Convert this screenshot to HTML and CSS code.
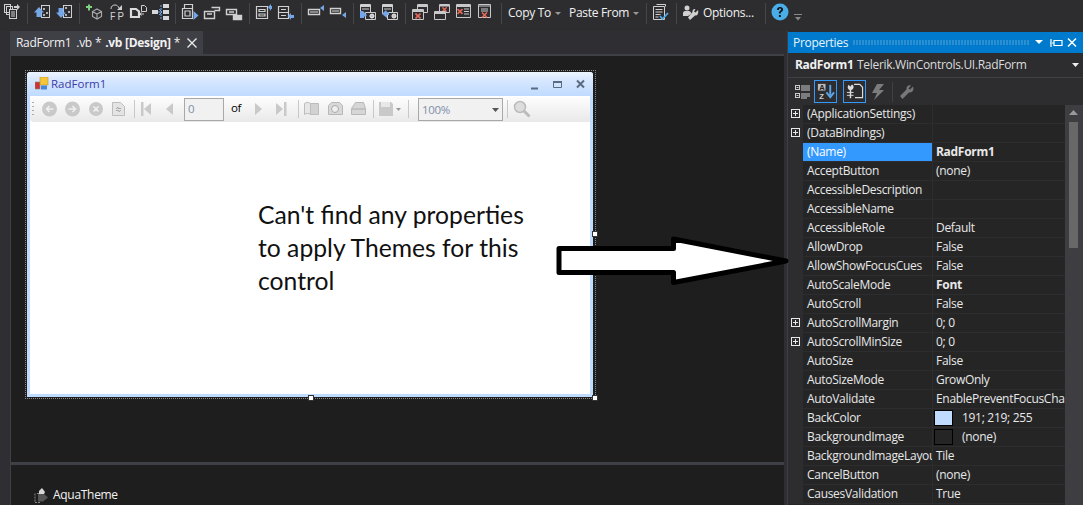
FILE: index.html
```html
<!DOCTYPE html>
<html lang="en">
<head>
<meta charset="utf-8">
<title>Properties</title>
<link rel="stylesheet" href="styles.css">
</head>
<body>
<svg class="defs" width="0" height="0" aria-hidden="true">
  <defs>
    <symbol id="plus" viewBox="0 0 9 9"><rect x=".5" y=".5" width="8" height="8" fill="none" stroke="#e8e8e8"/><path d="M2 4.500h5M4.500 2v5" stroke="#e8e8e8"/></symbol>
    <symbol id="redx" viewBox="0 0 6 6"><path d="M.5.500l5 5M5.500.500l-5 5" stroke="#e8695a" stroke-width="1.600"/></symbol>
    <symbol id="gear" viewBox="0 0 7 7"><circle cx="3.500" cy="3.500" r="2" fill="none" stroke="#ddd" stroke-width="1.400"/><path d="M3.500 0v7M0 3.500h7M1 1l5 5M6 1L1 6" stroke="#ddd" stroke-width=".7"/></symbol>
  </defs>
</svg>

<header class="toolbar">
  <svg class="tb" viewBox="0 0 22 30"><g fill="none" stroke="#d0d0d0"><rect x="3.500" y="4.500" width="6" height="8"/><rect x="5.500" y="6.500" width="6" height="8"/><rect x="8.500" y="9.500" width="7" height="9" fill="#2d2d30"/><path d="M10 12h4M10 14h4M10 16h4"/></g><path d="M13 6h3V4l3 3-3 3V8h-3z" fill="#d0d0d0"/></svg>
  <i class="sep"></i>
  <svg class="tb" viewBox="0 0 22 30"><rect x="10.500" y="5.500" width="8" height="12" fill="#2d2d30" stroke="#d0d0d0"/><circle cx="13" cy="9" r="1" fill="#ddd"/><circle cx="16" cy="13" r="1" fill="#ddd"/><circle cx="13" cy="15" r="1" fill="#ddd"/><path d="M8 7l5 5.500h-2.500V17h-5v-4.500H3z" fill="#74a7e8"/></svg>
  <svg class="tb" viewBox="0 0 22 30"><rect x="10.500" y="5.500" width="8" height="12" fill="#2d2d30" stroke="#d0d0d0"/><circle cx="13" cy="8" r="1" fill="#ddd"/><circle cx="16" cy="12" r="1" fill="#ddd"/><circle cx="13" cy="15" r="1" fill="#ddd"/><path d="M8 18l5-5.500h-2.500V8h-5v4.500H3z" fill="#74a7e8"/></svg>
  <i class="sep"></i>
  <svg class="tb" viewBox="0 0 22 30"><path d="M3 7h6M6 4.500v6" stroke="#7fd07f" stroke-width="2"/><path d="M14 9l4.500 2.500v5L14 19l-4.500-2.500v-5zM9.500 11.500L14 14l4.500-2.500M14 14v5" fill="none" stroke="#a8a8a8" stroke-width="1.200"/></svg>
  <svg class="tb" viewBox="0 0 22 30"><path d="M6 9c0-3 2-4 4-4s3 1 4 3" fill="none" stroke="#d0d0d0"/><path d="M17 5v5h-5z" fill="#d0d0d0"/><text class="fp" x="5" y="20">F P</text></svg>
  <svg class="tb" viewBox="0 0 22 30"><path d="M4 9h5l3 2.500v5.500H4z" fill="none" stroke="#dcdcdc" stroke-width="2.200"/><path d="M14.500 5.500h3l2 2v4h-5zM17 14h-4l1.500-1.500m-1.500 1.500l1.500 1.500" fill="none" stroke="#d0d0d0"/></svg>
  <svg class="tb" viewBox="0 0 22 30"><path d="M3 10h6v4H3zM14 4h6v4h-6zM14 10h6v4h-6zM14 16h6v4h-6z" fill="#d8d8d8"/><path d="M12 5v14M9 12h3" stroke="#74a7e8" stroke-dasharray="2 1"/><path d="M10 9l3 3-3 3" fill="none" stroke="#74a7e8"/></svg>
  <i class="sep"></i>
  <svg class="tb" viewBox="0 0 22 30"><path d="M5.500 8V4.500h8V8M3.500 8.500h10v10h-10zM6 11h5v5H6z" fill="none" stroke="#d0d0d0" stroke-width="1.200"/><path d="M14.500 11l5 4.500-5 4.500z" fill="#74a7e8"/></svg>
  <svg class="tb" viewBox="0 0 22 30"><path d="M3.500 11.500h10v7h-10zM10.500 7.500h8v3h-5M6 14h5" fill="none" stroke="#d0d0d0" stroke-width="1.400"/></svg>
  <svg class="tb" viewBox="0 0 22 30"><path d="M3.500 9.500h10v5h-10zM10.500 15.500h8v4h-8zM6 12h5" fill="none" stroke="#d0d0d0" stroke-width="1.400"/><rect x="11" y="16" width="7" height="3" fill="#d0d0d0"/></svg>
  <i class="sep"></i>
  <svg class="tb" viewBox="0 0 22 30"><path d="M3.500 6.500h11v12h-11zM6 9.500h6v2H6zM6 14h6v2H6z" fill="none" stroke="#d0d0d0" stroke-width="1.200"/><path d="M15 7l3-3v2h1v3h-1v2z" fill="#74a7e8"/></svg>
  <svg class="tb" viewBox="0 0 22 30"><path d="M3.500 6.500h10v12h-10zM4 12.500h9M6 9.500h5M6 15.500h5" fill="none" stroke="#d0d0d0" stroke-width="1.200"/><path d="M13 16l3-3v2h3v3h-3v2z" fill="#74a7e8"/></svg>
  <i class="sep"></i>
  <svg class="tb" viewBox="0 0 22 30"><path d="M3.500 9.500h11v5h-11z" fill="none" stroke="#d0d0d0" stroke-width="1.400"/><rect x="5" y="11" width="8" height="2" fill="#888"/><path d="M15 8l4-3v6z" fill="#74a7e8"/></svg>
  <svg class="tb" viewBox="0 0 22 30"><path d="M3.500 8.500h10v5h-10z" fill="none" stroke="#d0d0d0" stroke-width="1.400"/><rect x="5" y="10" width="7" height="2" fill="#888"/><path d="M15 15l4-3v6z" fill="#74a7e8"/></svg>
  <i class="sep"></i>
  <svg class="tb" viewBox="0 0 22 30"><path d="M3.500 4.500h10v9h-10z" fill="none" stroke="#d0d0d0"/><path d="M4 6h9" stroke="#d0d0d0" stroke-width="2"/><path d="M5 9h7" stroke="#d0d0d0"/><path d="M8.500 12.500h10v7h-10z" fill="#2d2d30" stroke="#d0d0d0"/><use href="#gear" x="12" y="13" width="6" height="6"/><path d="M3 11h3l4 4-2 2-1-1v2H3z" fill="#74a7e8"/></svg>
  <svg class="tb" viewBox="0 0 22 30"><path d="M3.500 4.500h10v9h-10z" fill="none" stroke="#d0d0d0"/><path d="M4 6h9" stroke="#d0d0d0" stroke-width="2"/><path d="M5 9h7" stroke="#d0d0d0"/><path d="M8.500 12.500h10v7h-10z" fill="#2d2d30" stroke="#d0d0d0"/><use href="#gear" x="12" y="13" width="6" height="6"/><path d="M3 14l4-4 1 2h2v3H8v3z" fill="#74a7e8"/></svg>
  <i class="sep"></i>
  <svg class="tb" viewBox="0 0 22 30"><path d="M8.500 4.500h10v8h-10z" fill="none" stroke="#c8c8c8"/><path d="M9 6h9" stroke="#c8c8c8" stroke-width="2"/><path d="M3.500 9.500h11v10h-11z" fill="#2d2d30" stroke="#c8c8c8"/><path d="M4 11h10" stroke="#c8c8c8" stroke-width="2"/><use href="#redx" x="6" y="13" width="6" height="6"/></svg>
  <svg class="tb" viewBox="0 0 22 30"><path d="M8.500 4.500h10v8h-10z" fill="none" stroke="#c8c8c8"/><path d="M9 5.500h9" stroke="#c8c8c8" stroke-width="2"/><use href="#redx" x="11" y="7" width="5" height="5"/><path d="M3.500 11.500h11v8h-11z" fill="#2d2d30" stroke="#c8c8c8"/><path d="M4 13h10" stroke="#c8c8c8" stroke-width="2"/></svg>
  <svg class="tb" viewBox="0 0 22 30"><path d="M3.500 4.500h14v13h-14z" fill="none" stroke="#c8c8c8"/><path d="M4 6h13" stroke="#c8c8c8" stroke-width="2"/><path d="M11 9h5M11 11.500h5M11 14h5" stroke="#c8c8c8"/><use href="#redx" x="4" y="8.500" width="6" height="6"/></svg>
  <svg class="tb" viewBox="0 0 22 30"><path d="M3.500 4.500h12v13h-12z" fill="none" stroke="#c8c8c8"/><path d="M4 6h11M6 9h7M6 11h7" stroke="#c8c8c8"/><use href="#redx" x="6.500" y="12" width="6" height="6"/></svg>
  <i class="sep"></i>
  <span class="menu menu-copy">Copy To<b class="caret"></b></span>
  <span class="menu menu-paste">Paste From<b class="caret"></b></span>
  <i class="sep"></i>
  <svg class="tb" viewBox="0 0 22 30"><path d="M6.500 4.500h9v2M3.500 6.500h11v13h-11z" fill="none" stroke="#d0d0d0"/><path d="M5.500 9.500h7M5.500 12h7M5.500 14.500h5M5.500 17h3" stroke="#d0d0d0"/><path d="M10 16l2.500 3L18 13" fill="none" stroke="#4fa8ea" stroke-width="1.800"/></svg>
  <i class="sep"></i>
  <span class="options">
    <svg class="opt-icon" viewBox="0 0 16 16"><circle cx="4" cy="3" r="2.500" fill="#d0d0d0"/><path d="M0 11V8c0-1 1-2 2-2h4c1 0 2 1 2 2v1l-3 2z" fill="#d0d0d0"/><path d="M15 5l-2.500 2.500-1.500-1 1.500-2.500c-2-.5-3.500 1-3 3L5 12.500 7 15l5-4.500c2 .5 4-1.500 3-5.500z" fill="#d0d0d0"/></svg>
    Options...
  </span>
  <i class="sep sep-help"></i>
  <svg class="help" viewBox="0 0 18 18"><circle cx="9" cy="9" r="8.500" fill="#49ade8"/><path d="M6 7c0-2 1.300-3 3.100-3s3 1 3 2.600c0 2.200-2.400 2-2.400 4H7.900c0-2.800 2.200-2.700 2.200-4 0-.6-.4-1-1-1s-1.100.4-1.200 1.400zM7.900 12h1.900v2H7.900z" fill="#111"/></svg>
  <svg class="overflow" viewBox="0 0 8 8"><path d="M0 1.500h8" stroke="#888"/><path d="M1 4h6L4 7.500z" fill="#888"/></svg>
</header>

<main class="workspace">
  <section class="doc">
    <div class="tabs">
      <div class="tab">
        <span class="t1">RadForm1</span><span class="t2">.vb</span><span class="t3">*</span><strong class="t4">.vb [Design]</strong><span class="t5">*</span>
        <svg class="tab-x" viewBox="0 0 10 10"><path d="M.5.500l9 9M9.500.500l-9 9" stroke="#e8e8e8" stroke-width="1.400"/></svg>
      </div>
    </div>
    <div class="tabline"></div>
    <div class="designer">
      <div class="selection">
        <div class="form">
          <div class="form-title">
            <svg class="form-icon" viewBox="0 0 14 14"><rect x="0" y="5" width="5" height="7" fill="#c33" stroke="#888" stroke-width=".6"/><rect x="5" y="0" width="8" height="8" fill="#f5c63a" stroke="#b8902a" stroke-width=".6"/><rect x="6" y="8.500" width="6" height="4" fill="#4a86d8"/></svg>
            <span class="form-name">RadForm1</span>
            <svg class="win-btns" viewBox="0 0 56 12"><path d="M0 9.500h7" stroke="#5a6a80" stroke-width="2"/><path d="M22.500 2.500h8v6h-8z" fill="none" stroke="#5a6a80"/><path d="M22 3h9" stroke="#5a6a80" stroke-width="2"/><path d="M46 1.500l7 7M53 1.500l-7 7" stroke="#5a6a80" stroke-width="2"/></svg>
          </div>
          <div class="form-bar">
            <svg class="fb-icons" viewBox="0 0 560 25">
              <g fill="#c9c9c9">
                <circle cx="19.500" cy="12" r="7.500"/><circle cx="42.500" cy="12" r="7.500"/><circle cx="66" cy="12" r="7"/>
                <path d="M111 5v14h2.500V5zM121 6v12l-7-6zM143 6v12l-7-6zM225 6v12l7-6zM246 6v12l7-6zM254 5v14h2.500V5z"/>
                <path d="M349 5h12l2 2v12h-14z"/><path d="M366 11h5l-2.500 3z" fill="#999"/>
              </g>
              <g fill="none" stroke="#f0f0f0" stroke-width="1.500"><path d="M23.500 12h-7m3-3l-3 3 3 3M38.500 12h7m-3-3l3 3-3 3M63.500 9.500l5 5m0-5l-5 5"/></g>
              <path d="M82.500 5.500h8l4 4v9h-12z" fill="#e4e4e4" stroke="#bdbdbd"/>
              <path d="M86 12l2-2v1.500h3M91 13l-2 2v-1.500h-3" fill="none" stroke="#aaa"/>
              <path d="M274.500 6.500c2-1.500 4-1.500 6 0v11c-2-1.500-4-1.500-6 0z" fill="#e6e6e6" stroke="#bdbdbd"/>
              <path d="M280.500 6.500h8v11h-8z" fill="#d2d2d2" stroke="#bdbdbd"/>
              <path d="M298.500 8.500l3-3h8l3 3v9h-14z" fill="#d8d8d8" stroke="#b8b8b8"/><circle cx="305" cy="12" r="3.500" fill="#eee" stroke="#aaa"/>
              <path d="M321.500 11.500l4-6h8l2 6v6h-14z" fill="#d6d6d6" stroke="#b8b8b8"/><path d="M322 12h13" stroke="#aaa"/>
              <rect x="351" y="5" width="9" height="5" fill="#e8e8e8"/>
              <path d="M3 5v1m0 3v1m0 3v1m0 3v1" stroke="#aaa" stroke-width="2"/>
              <path d="M104.500 3v18M268.500 3v18M343.500 3v18M378.500 3v18M477.500 3v18" stroke="#c8c8c8"/>
              <circle cx="490" cy="10" r="5.500" fill="#ddd" stroke="#bbb" stroke-width="1.500"/><path d="M494 14l5.500 5.500" stroke="#bbb" stroke-width="3"/>
            </svg>
            <span class="fb-input">0</span>
            <span class="fb-of">of</span>
            <span class="fb-combo">100%<svg class="fb-caret" viewBox="0 0 7 4"><path d="M0 0h7L3.500 4z" fill="#555"/></svg></span>
          </div>
          <div class="form-body">
            <p class="note">Can't find any properties<br>to apply Themes for this<br>control</p>
          </div>
        </div>
        <i class="handle h-right"></i>
        <i class="handle h-bottom"></i>
        <i class="handle h-corner"></i>
      </div>
    </div>
    <div class="tray">
      <svg class="tray-icon" viewBox="0 0 15 15"><path d="M1 5.500v9M1 14.500h5M3 5.500h3" stroke="#888" stroke-dasharray="2 1"/><path d="M4 6h6l4 3.500-5 4H4z" fill="#555"/><path d="M8 0l3 4-1 2H5V3z" fill="#d8d8d8"/></svg>
      <span>AquaTheme</span>
    </div>
  </section>

  <aside class="props">
    <div class="props-title">
      <span class="props-name">Properties</span>
      <i class="dots"></i>
      <svg class="title-btns" viewBox="0 0 42 12"><path d="M0 3h8L4 7z" fill="#fff"/><path d="M16 2v8M16 6h-1M19 3.500h8v5h-8zM17 6h2" fill="none" stroke="#fff" stroke-width="1.200"/><path d="M33 1.500l8 8M41 1.500l-8 8" stroke="#fff" stroke-width="1.500"/></svg>
    </div>
    <div class="props-object">
      <strong>RadForm1</strong><span>Telerik.WinControls.UI.RadForm</span>
      <svg class="obj-caret" viewBox="0 0 7 4"><path d="M0 0h7L3.500 4z" fill="#eee"/></svg>
    </div>
    <div class="props-tools">
      <svg class="pt pt-cat" viewBox="0 0 15 15"><g fill="none" stroke="#ccc"><rect x=".5" y="1.500" width="4" height="4"/><rect x=".5" y="9.500" width="4" height="4"/><path d="M6 2h9M6 4h9M6 6h9M6 10h9M6 12h9M6 14h6"/></g><path d="M1.500 3.500h2M1.500 11.500h2" stroke="#ccc"/></svg>
      <span class="pt-on pt-az"><svg viewBox="0 0 20 20"><rect x="2" y="2" width="8" height="7" fill="#bbb"/><text class="az" x="3.500" y="8.500">A</text><text class="az" x="3.500" y="18">Z</text><path d="M15 3v11" stroke="#5aa6e8" stroke-width="2"/><path d="M11 11l4 5 4-5" fill="none" stroke="#5aa6e8" stroke-width="2"/></svg></span>
      <span class="pt-on pt-pg"><svg viewBox="0 0 20 20"><path d="M9.500 2.500h6l3 3v11h-8" fill="none" stroke="#ddd" stroke-width="1.200"/><path d="M7 3L5.500 5 4 3C2 5 3 8 5 8.500V17h1.500V8.500C9 8 10 5 8 3z" fill="#ddd"/><path d="M2 11h7M2 14h7" stroke="#ddd"/></svg></span>
      <svg class="pt pt-bolt" viewBox="0 0 14 16"><path d="M6 0h7L8 6h5L3 16l3-7H1z" fill="#7c7c7c"/></svg>
      <i class="pt-sep"></i>
      <svg class="pt pt-wrench" viewBox="0 0 14 14"><path d="M13 1.500L10 4.500 8.500 3.500 11 .5C8.500-.5 6 1.500 6.500 4.500L0 11l2.500 3 6.500-6.500c3 .5 5.500-2 4-6z" fill="#777"/></svg>
    </div>
    <div class="grid-wrap">
      <div class="grid">
        <div class="row"><svg class="plus"><use href="#plus"/></svg><span class="k">(ApplicationSettings)</span><span class="v"></span></div>
        <div class="row"><svg class="plus"><use href="#plus"/></svg><span class="k">(DataBindings)</span><span class="v"></span></div>
        <div class="row row-sel"><span class="k">(Name)</span><span class="v v-b">RadForm1</span></div>
        <div class="row"><span class="k">AcceptButton</span><span class="v">(none)</span></div>
        <div class="row"><span class="k">AccessibleDescription</span><span class="v"></span></div>
        <div class="row"><span class="k">AccessibleName</span><span class="v"></span></div>
        <div class="row"><span class="k">AccessibleRole</span><span class="v">Default</span></div>
        <div class="row"><span class="k">AllowDrop</span><span class="v">False</span></div>
        <div class="row"><span class="k">AllowShowFocusCues</span><span class="v">False</span></div>
        <div class="row"><span class="k">AutoScaleMode</span><span class="v v-b">Font</span></div>
        <div class="row"><span class="k">AutoScroll</span><span class="v">False</span></div>
        <div class="row"><svg class="plus"><use href="#plus"/></svg><span class="k">AutoScrollMargin</span><span class="v">0; 0</span></div>
        <div class="row"><svg class="plus"><use href="#plus"/></svg><span class="k">AutoScrollMinSize</span><span class="v">0; 0</span></div>
        <div class="row"><span class="k">AutoSize</span><span class="v">False</span></div>
        <div class="row"><span class="k">AutoSizeMode</span><span class="v">GrowOnly</span></div>
        <div class="row"><span class="k">AutoValidate</span><span class="v">EnablePreventFocusChange</span></div>
        <div class="row"><span class="k">BackColor</span><span class="v"><i class="swatch swatch-blue"></i>191; 219; 255</span></div>
        <div class="row"><span class="k">BackgroundImage</span><span class="v"><i class="swatch"></i>(none)</span></div>
        <div class="row"><span class="k">BackgroundImageLayout</span><span class="v">Tile</span></div>
        <div class="row"><span class="k">CancelButton</span><span class="v">(none)</span></div>
        <div class="row"><span class="k">CausesValidation</span><span class="v">True</span></div>
      </div>
      <div class="scrollbar">
        <svg class="sb-up" viewBox="0 0 9 5"><path d="M0 5h9L4.500 0z" fill="#999"/></svg>
        <div class="sb-thumb"></div>
      </div>
    </div>
  </aside>
</main>

<svg class="arrow" viewBox="0 0 240 52" aria-hidden="true"><path d="M4 13.500h114.500V4L231 26 118.500 47.500V37.500H4z" fill="#fff" stroke="#000" stroke-width="5" stroke-linejoin="round"/></svg>
</body>
</html>
```
FILE: styles.css
```css
* { box-sizing: border-box; }
html, body { margin: 0; height: 100%; }
body {
  position: relative;
  width: 1083px;
  height: 505px;
  overflow: hidden;
  background: #2d2d30;
  color: #f1f1f1;
  font: 12px/16px "Open Sans", "Noto Sans", sans-serif;
  letter-spacing: -.3px;
}
.defs { position: absolute; }
i, b { display: block; font-style: normal; }

.toolbar { display: flex; height: 31px; padding-left: 1px; align-items: flex-start; }
.tb { width: 22px; height: 30px; flex: none; }
.sep { flex: none; width: 8px; height: 21px; margin-top: 3px; background: linear-gradient(#46464a, #46464a) center / 1px 100% no-repeat; }
.fp { font: 10px "Roboto", sans-serif; fill: #d0d0d0; }
.menu { display: flex; align-items: center; height: 26px; color: #f1f1f1; white-space: nowrap; }
.menu-copy { margin-left: 3px; width: 61px; }
.menu-paste { width: 73px; }
.caret { width: 0; height: 0; margin-left: 4px; border: 3px solid transparent; border-top: 3px solid #999; border-bottom: 0; }
.options { display: flex; align-items: center; height: 25px; margin-left: 3px; width: 79px; white-space: nowrap; }
.opt-icon { width: 16px; height: 16px; margin-right: 4px; flex: none; }
.help { width: 18px; height: 18px; flex: none; margin: 3px 5px 0 2px; }
.overflow { width: 8px; height: 8px; flex: none; margin-top: 13px; }
.sep-help { margin-left: -1px; }

.workspace { display: flex; height: 474px; }
.doc { width: 787px; flex: none; display: flex; flex-direction: column; padding: 0 3px 0 10px; background: #2f2f33; }
.tabs { height: 23px; flex: none; }
.tab { display: flex; align-items: center; width: 193px; height: 23px; background: #3f3f46; padding-left: 6px; white-space: nowrap; }
.t2 { margin-left: 5px; }
.t3 { margin-left: 3px; }
.t4 { margin-left: 4px; font-weight: 700; }
.t5 { margin-left: 3px; }
.tab-x { width: 10px; height: 10px; margin-left: auto; margin-right: 6px; flex: none; }
.tabline { height: 2px; flex: none; background: #3f3f46; }
.designer { height: 406px; flex: none; background: #1e1e1e; border-left: 1px solid #3f3f46; padding: 14px 0 0 14px; }
.selection { position: relative; width: 571px; height: 329px; border: 1px dotted #8a8a8a; padding: 1px 2px 1px 1px; }
.handle { position: absolute; width: 6px; height: 6px; background: #fff; border: 1px solid #333; }
.h-right { right: -3px; top: 160px; }
.h-bottom { left: 282px; bottom: -3px; }
.h-corner { right: -3px; bottom: -3px; }

.form { height: 325px; display: flex; flex-direction: column; border: 3px solid #bfdbff; border-top: 0; background: #fff; color: #000; border-radius: 3px 3px 0 0; }
.form-title { display: flex; align-items: center; height: 24px; flex: none; margin: 0 -3px; padding-left: 8px; background: linear-gradient(#eef5ff, #d9e8ff 30%, #bfdbff); border-radius: 3px 3px 0 0; }
.form-icon { width: 14px; height: 14px; flex: none; }
.form-name { margin-left: 2px; color: #3c3ca8; font-size: 11.5px; letter-spacing: 0; }
.win-btns { width: 56px; height: 12px; margin-left: auto; margin-right: 6px; margin-top: 1px; flex: none; }
.form-bar { position: relative; height: 26px; flex: none; border-top: 1px solid #fff; background: linear-gradient(#fdfdfd, #e9e9e9); border-radius: 4px 0 0 4px; }
.fb-icons { position: absolute; left: 0; top: 0; width: 560px; height: 25px; }
.fb-input, .fb-combo { position: absolute; top: 1px; height: 23px; border: 1px solid #a8a8a8; background: #f1f1f1; color: #7f8fa8; padding-left: 3px; font-size: 11.5px; line-height: 20px; }
.fb-input { left: 154px; width: 40px; }
.fb-of { position: absolute; left: 201px; top: 3px; font-size: 11.5px; }
.fb-combo { left: 388px; width: 85px; display: flex; justify-content: space-between; align-items: center; }
.fb-caret { width: 7px; height: 4px; margin-right: 3px; }
.form-body { flex: 1; padding: 76px 0 0 228px; }
.note { margin: 0; font: 24.7px/33px "Lato", "Open Sans", sans-serif; letter-spacing: 0; color: #111; }

.tray { display: flex; align-items: center; gap: 4px; height: 43px; border-top: 3px solid #3f3f46; background: #1e1e1e; padding: 20px 0 0 23px; border-left: 1px solid #3f3f46; }
.tray-icon { width: 15px; height: 15px; flex: none; }

.props { width: 296px; flex: none; border-left: 1px solid #3f3f46; display: flex; flex-direction: column; }
.props-title { display: flex; align-items: center; height: 21px; margin-top: 1px; flex: none; padding-left: 5px; background: #007acc; color: #e8f4fc; }
.props-name { width: 60px; flex: none; }
.dots { width: 176px; height: 5px; flex: none; background: radial-gradient(circle at 1px 1px, #2c8fd2 .8px, transparent 1px) 0 0 / 3px 2px; }
.title-btns { width: 42px; height: 12px; margin-left: 6px; flex: none; }
.props-object { display: flex; align-items: center; height: 25px; flex: none; padding-left: 7px; border-bottom: 1px solid #3f3f46; white-space: nowrap; }
.props-object strong { width: 62px; flex: none; font-weight: 700; }
.props-object span { color: #dcdcdc; }
.obj-caret { width: 7px; height: 4px; margin-left: auto; margin-right: 4px; flex: none; }
.props-tools { display: flex; align-items: center; height: 27px; flex: none; padding-left: 7px; }
.pt { flex: none; }
.pt-cat { width: 15px; height: 15px; }
.pt-on { display: flex; align-items: center; justify-content: center; width: 23px; height: 23px; border: 1px solid #3399ff; margin-left: 4px; }
.pt-on svg { width: 19px; height: 19px; }
.pt-pg { margin-left: 6px; }
.az { font: 700 8px "Liberation Sans", sans-serif; fill: #222; }
.pt-az .az + .az { fill: #ccc; }
.pt-bolt { width: 14px; height: 16px; margin-left: 5px; }
.pt-sep { width: 1px; height: 20px; background: #3f3f46; margin-left: 7px; }
.pt-wrench { width: 14px; height: 14px; margin-left: 7px; }

.grid-wrap { display: flex; flex: 1; min-height: 0; overflow: hidden; }
.grid { width: 277px; flex: none; background: #252526; }
.row { position: relative; display: grid; grid-template-columns: 15px 130px 132px; height: 19px; line-height: 18px; background: linear-gradient(#2d2d30, #2d2d30) 0 0 / 15px 100% no-repeat, linear-gradient(#2d2d30, #2d2d30) 0 100% / 100% 1px no-repeat; white-space: nowrap; }
.k { grid-column: 2; padding-left: 4px; overflow: hidden; border-right: 1px solid #2d2d30; color: #e8e8e8; }
.v { grid-column: 3; display: flex; align-items: flex-start; height: 18px; padding-left: 3px; overflow: hidden; color: #e8e8e8; }
.v-b { font-weight: 700; }
.row-sel .k { background: #3399ff; color: #fff; height: 18px; }
.plus { position: absolute; left: 3px; top: 4px; width: 9px; height: 9px; }
.swatch { flex: none; width: 19px; height: 16px; margin: 1px 9px 0 -2px; border: 1px solid #000; background: #252526; }
.swatch-blue { background: #bfdbff; }
.scrollbar { width: 18px; flex: none; background: #3e3e42; padding: 5px 0 0 4px; }
.sb-up { display: block; width: 9px; height: 5px; }
.sb-thumb { width: 9px; height: 126px; margin-top: 7px; background: #686868; }

.arrow { position: absolute; left: 555px; top: 235px; width: 240px; height: 52px; }
```
